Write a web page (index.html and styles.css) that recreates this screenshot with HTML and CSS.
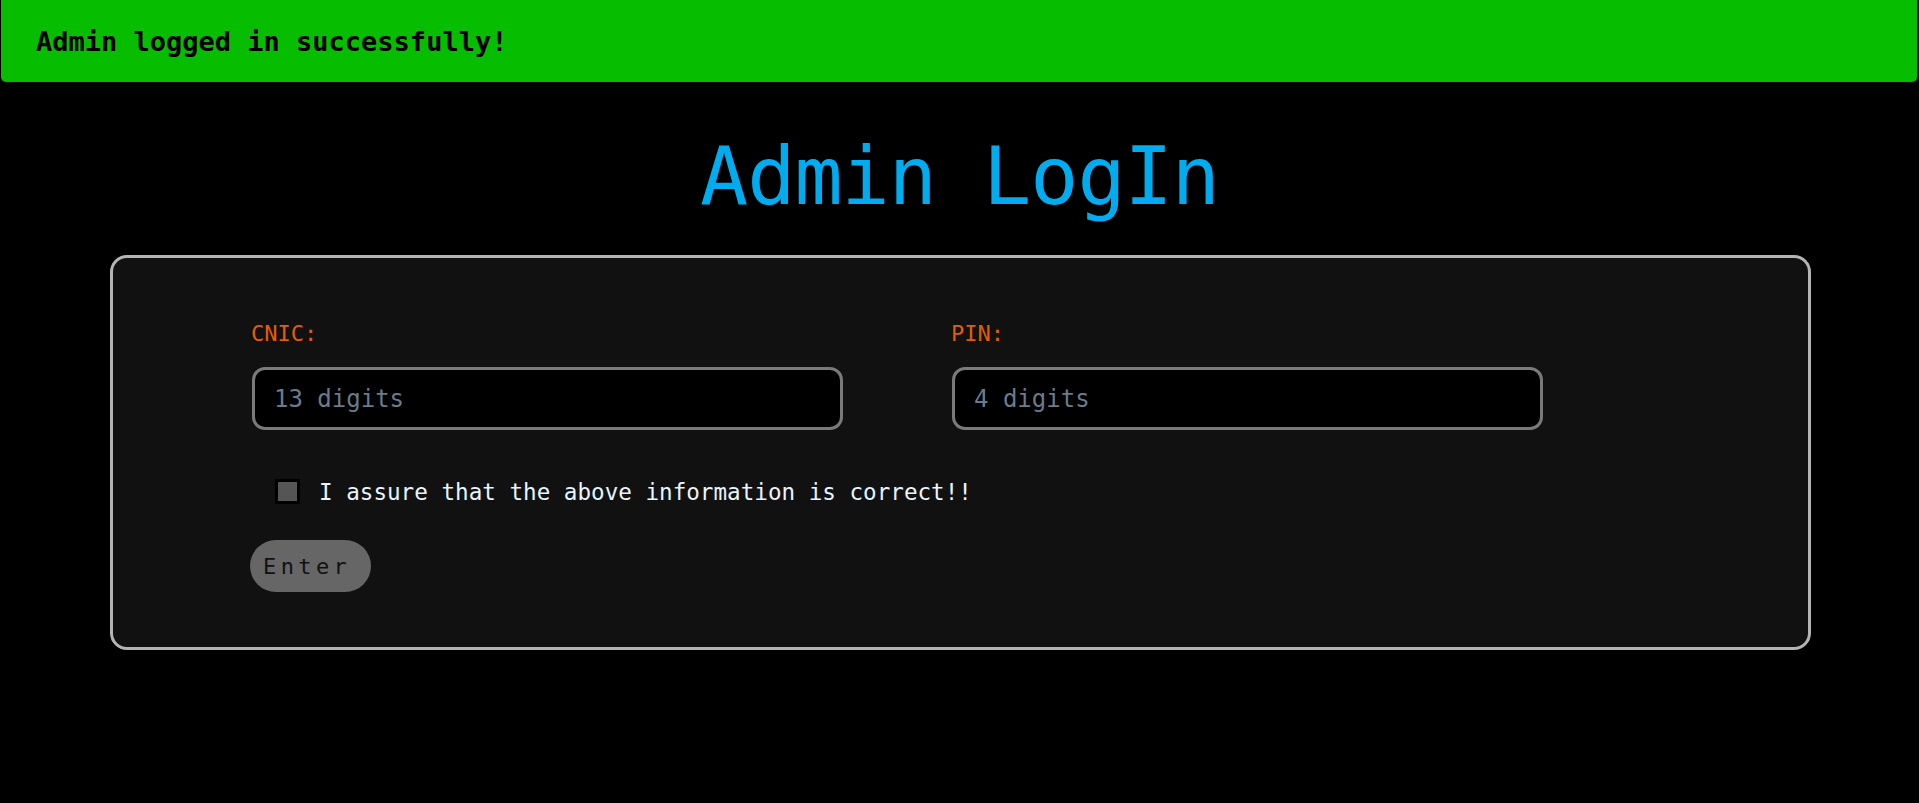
FILE: index.html
```html
<!DOCTYPE html>
<html lang="en">
<head>
<meta charset="utf-8">
<title>Admin LogIn</title>
<link rel="stylesheet" href="styles.css">
</head>
<body>
  <div class="toast">Admin logged in successfully!</div>
  <h1 class="title">Admin LogIn</h1>
  <form class="card">
    <div class="fields">
      <div class="field">
        <label class="field-label" for="cnic">CNIC:</label>
        <input class="field-input" id="cnic" type="text" placeholder="13 digits">
      </div>
      <div class="field">
        <label class="field-label" for="pin">PIN:</label>
        <input class="field-input" id="pin" type="password" placeholder="4 digits">
      </div>
    </div>
    <div class="check-row">
      <input class="check" type="checkbox" id="assure">
      <label class="check-label" for="assure">I assure that the above information is correct!!</label>
    </div>
    <button class="enter" type="button">Enter</button>
  </form>
</body>
</html>
```

FILE: styles.css
```css
* { box-sizing: border-box; }

html, body {
  margin: 0;
  padding: 0;
  background: #000;
  font-family: "DejaVu Sans Mono", "Liberation Mono", monospace;
}

.toast {
  margin: 0 2px 0 1px;
  height: 82px;
  padding: 2px 35px 0;
  line-height: 80px;
  background: #07bd00;
  color: #000;
  font-weight: bold;
  font-size: 27px;
  border-radius: 0 0 5px 5px;
}

.title {
  margin: 55px 0 0;
  font-size: 80px;
  line-height: 80px;
  letter-spacing: -1px;
  font-weight: normal;
  color: #00acf0;
  text-align: center;
}

.card {
  width: 1701px;
  margin: 38px 0 0 110px;
  padding: 63px 0 55px 139px;
  background: #111;
  border: 3px solid #b4b4b4;
  border-radius: 17px;
}

.fields {
  display: flex;
  gap: 109px;
}

.field {
  display: flex;
  flex-direction: column;
  gap: 20px;
  width: 591px;
}

.field-label {
  font-size: 22px;
  line-height: 26px;
  color: #e65c00;
  margin-left: -1px;
}

.field-input {
  width: 591px;
  height: 63px;
  padding: 0 0 0 19px;
  border: 3px solid #7a7a7a;
  border-radius: 13px;
  background: #000;
  color: #ddd;
  font-family: inherit;
  font-size: 24px;
  outline: none;
}

.field-input::placeholder {
  color: #6b7b8c;
}

.check-row {
  display: flex;
  align-items: center;
  gap: 19px;
  margin-top: 47px;
  padding-left: 23px;
}

.check {
  appearance: none;
  -webkit-appearance: none;
  margin: 0;
  width: 25px;
  height: 25px;
  border: 3px solid #000;
  background: #555;
}

.check-label {
  font-size: 22.6px;
  line-height: 25px;
  color: #e8f4ff;
  padding-top: 3px;
}

.enter {
  display: block;
  margin-top: 35px;
  margin-left: -2px;
  width: 121px;
  height: 52px;
  padding: 0 0 0 13px;
  border: none;
  border-radius: 26px;
  background: #666;
  color: #111;
  font-family: inherit;
  font-size: 22px;
  letter-spacing: 4.4px;
  text-align: left;
}
```
